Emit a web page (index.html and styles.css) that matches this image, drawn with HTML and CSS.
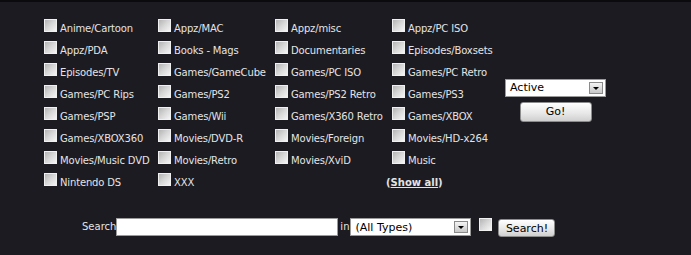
FILE: index.html
```html
<!DOCTYPE html>
<html>
<head>
<meta charset="utf-8">
<link rel="stylesheet" href="styles.css">
</head>
<body>
<div class="page">
  <div class="filters">
    <div class="cats">
      <label class="cat"><span class="cb"></span>Anime/Cartoon</label>
      <label class="cat"><span class="cb"></span>Appz/MAC</label>
      <label class="cat"><span class="cb"></span>Appz/misc</label>
      <label class="cat"><span class="cb"></span>Appz/PC ISO</label>
      <label class="cat"><span class="cb"></span>Appz/PDA</label>
      <label class="cat"><span class="cb"></span>Books - Mags</label>
      <label class="cat"><span class="cb"></span>Documentaries</label>
      <label class="cat"><span class="cb"></span>Episodes/Boxsets</label>
      <label class="cat"><span class="cb"></span>Episodes/TV</label>
      <label class="cat"><span class="cb"></span>Games/GameCube</label>
      <label class="cat"><span class="cb"></span>Games/PC ISO</label>
      <label class="cat"><span class="cb"></span>Games/PC Retro</label>
      <label class="cat"><span class="cb"></span>Games/PC Rips</label>
      <label class="cat"><span class="cb"></span>Games/PS2</label>
      <label class="cat"><span class="cb"></span>Games/PS2 Retro</label>
      <label class="cat"><span class="cb"></span>Games/PS3</label>
      <label class="cat"><span class="cb"></span>Games/PSP</label>
      <label class="cat"><span class="cb"></span>Games/Wii</label>
      <label class="cat"><span class="cb"></span>Games/X360 Retro</label>
      <label class="cat"><span class="cb"></span>Games/XBOX</label>
      <label class="cat"><span class="cb"></span>Games/XBOX360</label>
      <label class="cat"><span class="cb"></span>Movies/DVD-R</label>
      <label class="cat"><span class="cb"></span>Movies/Foreign</label>
      <label class="cat"><span class="cb"></span>Movies/HD-x264</label>
      <label class="cat"><span class="cb"></span>Movies/Music DVD</label>
      <label class="cat"><span class="cb"></span>Movies/Retro</label>
      <label class="cat"><span class="cb"></span>Movies/XviD</label>
      <label class="cat"><span class="cb"></span>Music</label>
      <label class="cat"><span class="cb"></span>Nintendo DS</label>
      <label class="cat"><span class="cb"></span>XXX</label>
      <span class="cat empty"></span>
      <div class="showall">(<a href="#">Show all</a>)</div>
    </div>
    <div class="status">
      <div class="select sel-active"><span class="val">Active</span><span class="arrow"></span></div>
      <button class="btn go">Go!</button>
    </div>
  </div>
  <div class="search">
    <span class="lbl">Search</span>
    <span class="input"></span>
    <span class="lbl in">in</span>
    <div class="select sel-types"><span class="val">(All Types)</span><span class="arrow"></span></div>
    <span class="cb solo"></span>
    <button class="btn sbtn">Search!</button>
  </div>
</div>
</body>
</html>
```

FILE: styles.css
```css
html, body {
  margin: 0;
  padding: 0;
  background: #1c1b21;
}
body {
  font-family: "DejaVu Sans", Verdana, sans-serif;
  font-size: 10px;
  color: #e4e4e4;
}
.page {
  width: 691px;
  height: 255px;
  border-top: 2px solid #0b0b0d;
  box-sizing: border-box;
  padding-top: 17px;
}
.filters {
  display: flex;
  align-items: center;
  padding-left: 44px;
}
.cats {
  display: grid;
  grid-template-columns: 114px 117px 117px 113px;
  grid-auto-rows: 22px;
}
.cat {
  display: flex;
  align-items: flex-start;
  gap: 3px;
  white-space: nowrap;
  line-height: 15px;
  letter-spacing: -0.15px;
  padding-top: 2px;
}
.cb {
  width: 11px;
  height: 11px;
  flex: none;
  border: 1px solid #f0f0f0;
  background: linear-gradient(135deg, #b4b4b4 0%, #d8d8d8 50%, #f4f4f4 100%);
  display: inline-block;
}
.cat .cb {
  margin-top: -2px;
}
.showall {
  margin-left: -6px;
  font-weight: bold;
  color: #e4e4e4;
  line-height: 15px;
  padding-top: 2px;
  white-space: nowrap;
}
.showall a {
  color: #e4e4e4;
  text-decoration: underline;
}
.status {
  display: flex;
  flex-direction: column;
  align-items: center;
  gap: 5px;
  margin-top: -14px;
}
.select {
  display: flex;
  align-items: center;
  justify-content: space-between;
  background: #fff;
  border: 1px solid #9a9a9a;
  box-sizing: border-box;
  color: #000;
  font-size: 11px;
  padding-left: 4px;
}
.sel-active {
  width: 101px;
  height: 18px;
}
.sel-types {
  width: 121px;
  height: 18px;
}
.arrow {
  width: 14px;
  height: 12px;
  margin-right: 2px;
  border: 1px solid #8a8a8a;
  box-sizing: border-box;
  background: linear-gradient(#f4f4f4, #c8c8c8);
  position: relative;
}
.arrow::after {
  content: "";
  position: absolute;
  left: 3px;
  top: 4px;
  border-left: 3px solid transparent;
  border-right: 3px solid transparent;
  border-top: 3px solid #000;
}
.btn {
  font-family: "DejaVu Sans", Verdana, sans-serif;
  font-size: 11px;
  color: #000;
  background: linear-gradient(#ffffff, #e6e6e6 60%, #cfcfcf);
  border: 1px solid #8c8c8c;
  border-radius: 3px;
  padding: 0;
}
.go {
  width: 72px;
  height: 20px;
}
.search {
  display: flex;
  align-items: flex-start;
  margin-top: 23px;
  padding-left: 82px;
}
.search .lbl {
  line-height: 18px;
  font-size: 10px;
}
.input {
  width: 222px;
  height: 18px;
  background: #fff;
  border: 1px solid #9a9a9a;
  box-sizing: border-box;
}
.in {
  margin: 0 1px 0 2px;
}
.cb.solo {
  margin-left: 8px;
}
.sbtn {
  margin-left: 6px;
  width: 57px;
  height: 18px;
  margin-top: 1px;
}
```
